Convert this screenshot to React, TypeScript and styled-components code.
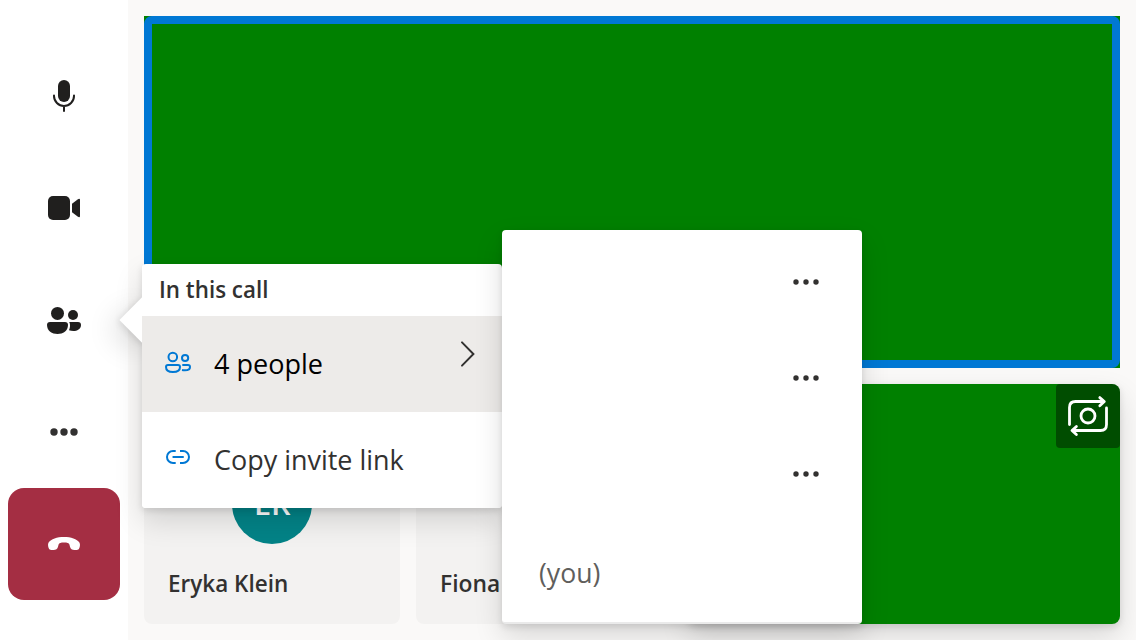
import React from "react";
import styled, { createGlobalStyle } from "styled-components";

const GlobalStyle = createGlobalStyle`
  * { box-sizing: border-box; }
  body {
    margin: 0;
    background: #faf9f8;
    color: #323130;
    font-family: "Open Sans", "Noto Sans", sans-serif;
    overflow: hidden;
  }
  svg { display: block; flex: none; }
`;

const Page = styled.div`
  position: relative;
  display: flex;
  width: 1136px;
  height: 640px;
  overflow: hidden;
  background: #faf9f8;
`;

const ControlBar = styled.nav`
  display: flex;
  flex-direction: column;
  justify-content: center;
  width: 128px;
  padding: 0 8px;
  background: #ffffff;
`;

const ControlButton = styled.button<{ $danger?: boolean }>`
  display: flex;
  align-items: center;
  justify-content: center;
  width: 112px;
  height: 112px;
  padding: 0;
  border: 0;
  border-radius: 16px;
  color: #201f1e;
  background: ${(p) => (p.$danger ? "#a42e43" : "transparent")};
`;

const Stage = styled.main`
  display: grid;
  flex: 1;
  grid-template-rows: 352px 240px;
  gap: 16px;
  padding: 16px;
`;

const SpeakerVideo = styled.section`
  display: grid;
  background: #008000;
`;

const SpeakingFrame = styled.div`
  border: 8px solid #0078d4;
  border-radius: 8px;
`;

const Gallery = styled.section`
  display: grid;
  grid-template-columns: 256px 256px 1fr;
  gap: 16px;
`;

const Tile = styled.article<{ $noAvatar?: boolean }>`
  display: flex;
  flex-direction: column;
  align-items: flex-start;
  justify-content: ${(p) => (p.$noAvatar ? "flex-end" : "space-between")};
  padding: 80px 24px 23px;
  border-radius: 8px;
  background: #f3f2f1;
`;

const Avatar = styled.div`
  display: flex;
  align-items: center;
  justify-content: center;
  align-self: center;
  width: 80px;
  height: 80px;
  border-radius: 50%;
  background: #038387;
`;

const Text = styled.span<{ $size: number; $weight?: number; $color?: string; $scale?: number }>`
  display: inline-block;
  transform: scaleX(${(p) => p.$scale ?? 1});
  transform-origin: left center;
  color: ${(p) => p.$color ?? "#323130"};
  font-size: ${(p) => p.$size}px;
  font-weight: ${(p) => p.$weight ?? 400};
  line-height: 36px;
  white-space: nowrap;
`;

const LocalVideo = styled.article`
  display: flex;
  align-items: flex-start;
  justify-content: flex-end;
  border-radius: 8px;
  background: #008000;
  box-shadow: 0 12.8px 28.8px rgba(0, 0, 0, 0.132), 0 2.4px 7.2px rgba(0, 0, 0, 0.108);
`;

const FlipButton = styled.button`
  display: flex;
  align-items: center;
  justify-content: center;
  width: 64px;
  height: 64px;
  padding: 0;
  border: 0;
  border-radius: 4px 8px 4px 4px;
  background: rgba(0, 0, 0, 0.4);
`;

const popupShadow = "0 12.8px 28.8px rgba(0, 0, 0, 0.132), 0 2.4px 7.2px rgba(0, 0, 0, 0.108)";

const Callout = styled.div`
  position: absolute;
  left: 142px;
  top: 264px;
  width: 360px;
  border-radius: 4px;
  box-shadow: ${popupShadow};
`;

const Beak = styled.div`
  position: absolute;
  left: -16px;
  top: 40px;
  width: 32px;
  height: 32px;
  transform: rotate(45deg);
  background: #ffffff;
  box-shadow: ${popupShadow};
`;

const Menu = styled.div`
  position: relative;
  overflow: hidden;
  border-radius: 4px;
  background: #ffffff;
`;

const MenuHeader = styled.div`
  display: flex;
  align-items: center;
  height: 52px;
  padding: 0 17px 2px;
`;

const MenuItem = styled.div<{ $active?: boolean }>`
  display: grid;
  grid-template-columns: 32px 1fr 20px;
  align-items: start;
  column-gap: 20px;
  height: 96px;
  padding: 29px 24px 0 20px;
  background: ${(p) => (p.$active ? "#edebe9" : "#ffffff")};
`;

const ItemIcon = styled.div`
  display: flex;
  padding-top: 1px;
`;

const Submenu = styled.div`
  position: absolute;
  left: 502px;
  top: 230px;
  width: 360px;
  height: 394px;
  padding-top: 4px;
  border-bottom: 2px solid #eaeaea;
  border-radius: 4px;
  background: #ffffff;
  box-shadow: ${popupShadow};
`;

const ParticipantRow = styled.div<{ $self?: boolean }>`
  display: flex;
  align-items: center;
  justify-content: ${(p) => (p.$self ? "flex-start" : "flex-end")};
  height: 96px;
  padding: ${(p) => (p.$self ? "3px 42px 0 37px" : "0 42px 0 36px")};
`;

const MicIcon = () => (
  <svg width="32" height="32" viewBox="0 0 32 32">
    <rect x="10" y="0" width="12" height="22" rx="6" fill="currentColor" />
    <path d="M6 15.5v.5a10 10 0 0 0 20 0v-.5M16 26v5" fill="none" stroke="currentColor" strokeWidth="2" strokeLinecap="round" />
  </svg>
);

const VideoIcon = () => (
  <svg width="32" height="32" viewBox="0 0 32 32">
    <rect x="0" y="4" width="22" height="24" rx="5" fill="currentColor" />
    <path d="M24 11.7 29.6 7.4Q32 6 32 8V24Q32 26 29.6 24.6L24 20.3Z" fill="currentColor" />
  </svg>
);

const PeopleIcon = () => (
  <svg width="36" height="32" viewBox="0 0 36 32" fill="currentColor">
    <circle cx="11.5" cy="9.4" r="6.5" />
    <circle cx="27" cy="11" r="5" />
    <path d="M4 18H19Q22 18 22 21C22 27 17 30 11.5 30S1 27 1 21Q1 18 4 18Z" />
    <path d="M23.2 18H32Q35 18 35 21C35 25 31 27 27.5 27Q25 27 23 26.2C24.4 23.6 24.4 20 23.2 18Z" />
  </svg>
);

const DotsIcon = ({ r }: { r: number }) => (
  <svg width="28" height="10" viewBox="0 0 28 10" fill="#323130">
    <circle cx="4" cy="5" r={r} />
    <circle cx="14" cy="5" r={r} />
    <circle cx="24" cy="5" r={r} />
  </svg>
);

const HangUpIcon = () => (
  <svg width="32" height="32" viewBox="0 0 32 32">
    <path
      d="M16 9C23 9 29 11 31.4 14.5C32.4 16.5 32 19 31 20.8C30 22.2 28.5 22 26.5 22C24 22 22.6 21 22 18.7L21.4 16.4C21 15 19 14.4 16 14.4S11 15 10.6 16.4L10 18.7C9.4 21 8 22 5.5 22C3.5 22 2 22.2 1 20.8C0 19 -.4 16.5 .6 14.5C3 11 9 9 16 9Z"
      fill="#ffffff"
    />
  </svg>
);

const PeopleOutlineIcon = () => (
  <svg width="32" height="32" viewBox="0 0 32 32" fill="none" stroke="#0078d4" strokeWidth="2">
    <circle cx="10.8" cy="11" r="4.3" />
    <circle cx="23.1" cy="12" r="3.1" />
    <path d="M6 19H16Q18 19 18 21C18 25 14.5 26.1 11 26.1S4 25 4 21Q4 19 6 19Z" />
    <path d="M20.3 19H26Q28 19 28 21C28 23.4 25.5 24.3 23 24.3Q21.4 24.3 20 24" />
  </svg>
);

const LinkIcon = () => (
  <svg width="32" height="32" viewBox="0 0 32 32" fill="none" stroke="#0078d4" strokeWidth="2">
    <path d="M13.7 9H11a6 6 0 0 0 0 12H13.7M18 9H21a6 6 0 0 1 0 12H18" />
    <path d="M11.3 15H21" strokeLinecap="round" />
  </svg>
);

const ChevronIcon = () => (
  <svg width="20" height="32" viewBox="0 0 20 32" fill="none" stroke="#323130" strokeWidth="2">
    <path d="M4 -2.6 15.4 9 4 20.6" strokeLinecap="round" />
  </svg>
);

const Chevron = styled.div`
  svg { overflow: visible; }
`;

const FlipCameraIcon = () => (
  <svg
    width="48"
    height="48"
    viewBox="0 0 48 48"
    fill="none"
    stroke="#ffffff"
    strokeWidth="2.8"
    strokeLinecap="round"
    strokeLinejoin="round"
  >
    <path d="M5.5 32.5V15.5Q5.5 9.5 11.5 9.5H39.5M35.8 5.6 40.3 9.5 35.8 13.7" />
    <path d="M42.5 16V32.5Q42.5 38.5 36.5 38.5H8.5M12.4 34.4 8 38.5 12.4 42.6" />
    <circle cx="24" cy="24" r="7" />
  </svg>
);

const AvatarText = styled.span`
  color: #ffffff;
  font-size: 29px;
  font-weight: 600;
  line-height: 36px;
  transform: scaleX(1.06);
`;

export default function App() {
  return (
    <Page>
      <GlobalStyle />
      <ControlBar>
        <ControlButton aria-label="Microphone"><MicIcon /></ControlButton>
        <ControlButton aria-label="Camera"><VideoIcon /></ControlButton>
        <ControlButton aria-label="People"><PeopleIcon /></ControlButton>
        <ControlButton aria-label="More"><DotsIcon r={3.7} /></ControlButton>
        <ControlButton aria-label="Leave" $danger><HangUpIcon /></ControlButton>
      </ControlBar>
      <Stage>
        <SpeakerVideo><SpeakingFrame /></SpeakerVideo>
        <Gallery>
          <Tile>
            <Avatar><AvatarText>ER</AvatarText></Avatar>
            <Text $size={24} $weight={600} $scale={0.937}>Eryka Klein</Text>
          </Tile>
          <Tile $noAvatar>
            <Text $size={24} $weight={600} $scale={0.95}>Fiona</Text>
          </Tile>
          <LocalVideo>
            <FlipButton aria-label="Switch camera"><FlipCameraIcon /></FlipButton>
          </LocalVideo>
        </Gallery>
      </Stage>
      <Callout>
        <Beak />
        <Menu>
          <MenuHeader>
            <Text $size={24} $weight={600} $scale={0.932}>In this call</Text>
          </MenuHeader>
          <MenuItem $active>
            <ItemIcon><PeopleOutlineIcon /></ItemIcon>
            <Text $size={28} $color="#000000" $scale={0.965}>4 people</Text>
            <Chevron><ChevronIcon /></Chevron>
          </MenuItem>
          <MenuItem>
            <ItemIcon><LinkIcon /></ItemIcon>
            <Text $size={28} $scale={0.962}>Copy invite link</Text>
          </MenuItem>
        </Menu>
      </Callout>
      <Submenu>
        {[0, 1, 2].map((i) => (
          <ParticipantRow key={i}>
            <DotsIcon r={2.7} />
          </ParticipantRow>
        ))}
        <ParticipantRow $self>
          <Text $size={28} $color="#605e5c" $scale={0.95}>(you)</Text>
        </ParticipantRow>
      </Submenu>
    </Page>
  );
}
